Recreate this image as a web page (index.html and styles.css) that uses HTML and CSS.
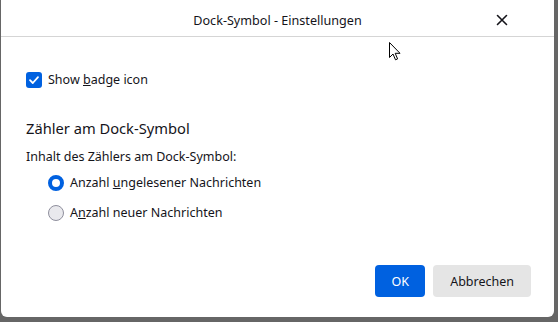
FILE: index.html
```html
<!DOCTYPE html>
<html lang="de">
<head>
    <meta charset="UTF-8">
    <title>Dock-Symbol - Einstellungen</title>
    <link rel="stylesheet" href="styles.css">
</head>
<body>

<div class="window">
    <div class="titlebar">
        <div class="title">Dock-Symbol - Einstellungen</div>
        <span class="close">
            <svg width="12" height="12" viewBox="0 0 12 12">
                <path d="M1.5 1.5 L10.5 10.5 M10.5 1.5 L1.5 10.5" stroke="#15141a" stroke-width="1.6" stroke-linecap="round"/>
            </svg>
        </span>
    </div>

    <div class="content">
        <label class="check-row">
            <span class="checkbox">
                <svg width="12" height="12" viewBox="0 0 12 12">
                    <path d="M2 6.2 L4.8 9 L10 3.2" fill="none" stroke="#fff" stroke-width="1.8" stroke-linecap="round" stroke-linejoin="round"/>
                </svg>
            </span>
            <span>Show <u>b</u>adge icon</span>
        </label>

        <h2 class="section-title">Zähler am Dock-Symbol</h2>
        <div class="section-desc">Inhalt des Zählers am Dock-Symbol:</div>

        <div class="radio-group">
            <label class="radio-row">
                <span class="radio checked"></span>
                <span>Anzahl <u>u</u>ngelesener Nachrichten</span>
            </label>
            <label class="radio-row">
                <span class="radio"></span>
                <span>A<u>n</u>zahl neuer Nachrichten</span>
            </label>
        </div>
    </div>

    <div class="buttons">
        <button class="btn btn-primary">OK</button>
        <button class="btn">Abbrechen</button>
    </div>

    <svg class="cursor" width="12" height="20" viewBox="0 0 12 20">
        <path d="M0.5 0.5 L0.5 15.5 L4 12 L6.5 17.8 L8.6 16.9 L6.2 11.3 L11 11.3 Z" fill="#fff" stroke="#000" stroke-width="1"/>
    </svg>
</div>

</body>
</html>
```

FILE: styles.css
```css
/* Dialog window on a dark backdrop */
body {
    margin: 0;
    background-color: #666;
    font-family: "Noto Sans", "Open Sans", sans-serif;
    color: #15141a;
}
.window {
    position: relative;
    margin-left: 1px;
    width: 553px;
    height: 317px;
    background-color: #fff;
    border-radius: 0 0 6px 6px;
    display: flex;
    flex-direction: column;
}
.titlebar {
    height: 37px;
    padding-top: 4px;
    border-bottom: 1px solid #d5d5d5;
    display: flex;
    align-items: center;
    justify-content: center;
    position: relative;
    box-sizing: border-box;
}
.title {
    font-size: 12.6px;
}
.close {
    position: absolute;
    right: 46px;
    top: 14px;
    display: flex;
}
.content {
    flex: 1;
    padding: 34px 25px 0;
}
.check-row {
    display: flex;
    align-items: center;
    gap: 6px;
    font-size: 12.5px;
}
.checkbox {
    width: 16px;
    height: 16px;
    border-radius: 3px;
    background-color: #0061e0;
    display: flex;
    align-items: center;
    justify-content: center;
}
.section-title {
    font-size: 14.7px;
    font-weight: normal;
    margin: 30px 0 0;
}
.section-desc {
    font-size: 12.5px;
    margin-top: 10px;
}
.radio-group {
    display: flex;
    flex-direction: column;
    gap: 13px;
    margin: 9px 0 0 22px;
}
.radio-row {
    display: flex;
    align-items: center;
    gap: 6px;
    font-size: 12.5px;
}
.radio {
    width: 16px;
    height: 16px;
    box-sizing: border-box;
    border-radius: 50%;
    border: 1px solid #8f8f9d;
    background-color: #e9e9ed;
}
.radio.checked {
    border: 4px solid #0061e0;
    background-color: #fff;
}
.buttons {
    display: flex;
    justify-content: flex-end;
    gap: 8px;
    padding: 0 23px 20px 0;
}
.btn {
    height: 32px;
    padding: 0 17px;
    border: none;
    border-radius: 4px;
    background-color: #e5e5e5;
    color: #15141a;
    font-family: "Noto Sans", "Open Sans", sans-serif;
    font-size: 12.5px;
}
.btn-primary {
    width: 50px;
    padding: 0;
    background-color: #0061e0;
    color: #fff;
}
.cursor {
    position: absolute;
    left: 388px;
    top: 42px;
}
```
